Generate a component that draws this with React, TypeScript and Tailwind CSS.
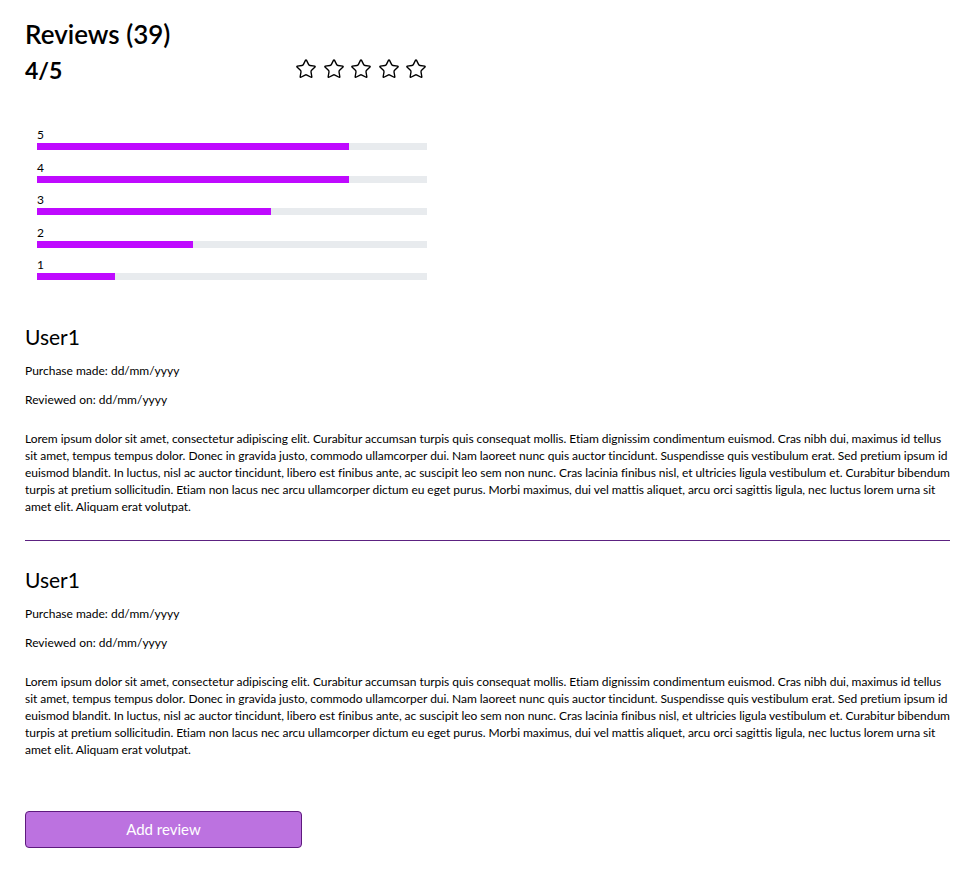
import { Star } from "lucide-react";

const bars = [
  { label: "5", pct: 80 },
  { label: "4", pct: 80 },
  { label: "3", pct: 60 },
  { label: "2", pct: 40 },
  { label: "1", pct: 20 },
];

const lorem =
  "Lorem ipsum dolor sit amet, consectetur adipiscing elit. Curabitur accumsan turpis quis consequat mollis. Etiam dignissim condimentum euismod. Cras nibh dui, maximus id tellus sit amet, tempus tempus dolor. Donec in gravida justo, commodo ullamcorper dui. Nam laoreet nunc quis auctor tincidunt. Suspendisse quis vestibulum erat. Sed pretium ipsum id euismod blandit. In luctus, nisl ac auctor tincidunt, libero est finibus ante, ac suscipit leo sem non nunc. Cras lacinia finibus nisl, et ultricies ligula vestibulum et. Curabitur bibendum turpis at pretium sollicitudin. Etiam non lacus nec arcu ullamcorper dictum eu eget purus. Morbi maximus, dui vel mattis aliquet, arcu orci sagittis ligula, nec luctus lorem urna sit amet elit. Aliquam erat volutpat.";

function Review({ divider }: { divider?: boolean }) {
  return (
    <div className={divider ? "border-b border-[#5c2281] pb-[25px]" : ""}>
      <h2 className="text-[21px] leading-[26px]">User1</h2>
      <p className="mt-[13px] text-[12px] leading-[16px]">Purchase made: dd/mm/yyyy</p>
      <p className="mt-[13px] text-[12px] leading-[16px]">Reviewed on: dd/mm/yyyy</p>
      <p className="mt-[22px] text-[12px] leading-[17px] tracking-[-0.05px]">{lorem}</p>
    </div>
  );
}

export default function App() {
  return (
    <div className="min-h-screen bg-white px-[25px] pt-[17px] pb-10 text-black" style={{ fontFamily: '"Segoe UI", Lato, sans-serif' }}>
      <h1 className="text-[26px] font-semibold leading-[34px]">Reviews (39)</h1>
      <div className="mt-[4px] flex w-[402px] items-center justify-between">
        <span className="text-[23px] font-bold leading-[30px]">4/5</span>
        <div className="-mt-[3px] flex gap-[5.5px]">
          {[0, 1, 2, 3, 4].map((i) => (
            <Star key={i} size={22} strokeWidth={1.5} />
          ))}
        </div>
      </div>

      <div className="mt-[43px] ml-[12px] flex w-[390px] flex-col gap-[10.5px]">
        {bars.map((b) => (
          <div key={b.label}>
            <div className="text-[12px] leading-[14px]">{b.label}</div>
            <div className="mt-[1px] h-[7px] w-full bg-[#e8ebee]">
              <div className="h-full bg-[#bf0aff]" style={{ width: `${b.pct}%` }} />
            </div>
          </div>
        ))}
      </div>

      <div className="mt-[44px] flex w-[925px] flex-col gap-[26px]">
        <Review divider />
        <Review />
      </div>

      <button className="mt-[53px] h-[37px] w-[277px] rounded-[4px] border border-[#5e1a7e] bg-[#bc72e0] text-[15px] text-white">
        Add review
      </button>
    </div>
  );
}
